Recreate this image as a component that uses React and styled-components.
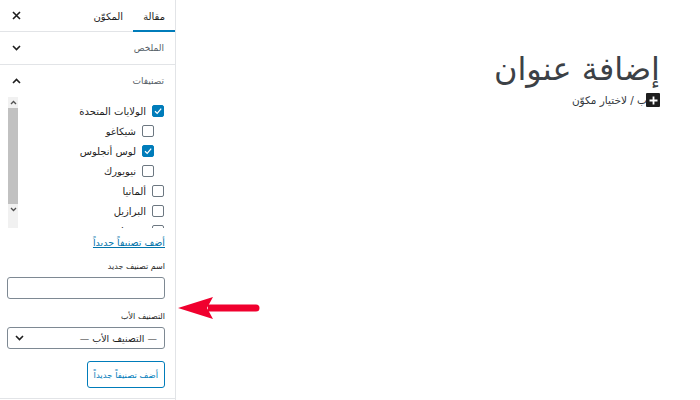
import React from "react";
import styled, { createGlobalStyle } from "styled-components";

const GlobalStyle = createGlobalStyle`
  html, body {
    margin: 0;
    padding: 0;
    background: #fff;
    font-family: "DejaVu Sans", "Noto Sans", sans-serif;
  }
`;

const categories = [
  { name: "الولايات المتحدة", checked: true, depth: 0 },
  { name: "شيكاغو", checked: false, depth: 1 },
  { name: "لوس أنجلوس", checked: true, depth: 1 },
  { name: "نيويورك", checked: false, depth: 1 },
  { name: "ألمانيا", checked: false, depth: 0 },
  { name: "البرازيل", checked: false, depth: 0 },
  { name: "فرنسا", checked: false, depth: 0 },
];

const Chevron = ({ up }) => (
  <svg width="9" height="6" viewBox="0 0 9 6">
    <path
      d={up ? "M1 5 L4.5 1.5 L8 5" : "M1 1 L4.5 4.5 L8 1"}
      fill="none"
      stroke="#1e1e1e"
      strokeWidth="1.6"
    />
  </svg>
);

const Tick = () => (
  <svg width="10" height="10" viewBox="0 0 10 10">
    <path d="M2 5.2 L4.2 7.4 L8.2 2.6" fill="none" stroke="#fff" strokeWidth="1.3" />
  </svg>
);

export default function App() {
  return (
    <>
      <GlobalStyle />
      <Page>
        <Sidebar dir="rtl">
          <Tabs>
            <Tab active>مقالة</Tab>
            <Tab>المكوّن</Tab>
            <Close>
              <svg width="9" height="9" viewBox="0 0 9 9">
                <path d="M1 1 L8 8 M8 1 L1 8" stroke="#1e1e1e" strokeWidth="1.6" />
              </svg>
            </Close>
          </Tabs>

          <Panel>
            <PanelHead>
              <span>الملخص</span>
              <Chevron />
            </PanelHead>
          </Panel>

          <Panel>
            <PanelHead>
              <span>تصنيفات</span>
              <Chevron up />
            </PanelHead>

            <ListBox>
              <List>
                {categories.map((c) => (
                  <Item key={c.name} depth={c.depth}>
                    <Box checked={c.checked}>{c.checked && <Tick />}</Box>
                    <span>{c.name}</span>
                  </Item>
                ))}
              </List>
              <Scrollbar>
                <ScrollBtn>
                  <svg width="7" height="5" viewBox="0 0 7 5">
                    <path d="M1 4 L3.5 1.5 L6 4" fill="none" stroke="#505050" strokeWidth="1.3" />
                  </svg>
                </ScrollBtn>
                <Thumb />
                <ScrollBtn>
                  <svg width="7" height="5" viewBox="0 0 7 5">
                    <path d="M1 1 L3.5 3.5 L6 1" fill="none" stroke="#505050" strokeWidth="1.3" />
                  </svg>
                </ScrollBtn>
              </Scrollbar>
            </ListBox>

            <AddForm>
              <AddLink>أضف تصنيفاً جديداً</AddLink>
              <Label>اسم تصنيف جديد</Label>
              <Input />
              <Label gap={12}>التصنيف الأب</Label>
              <Select>
                <span>— التصنيف الأب —</span>
                <Chevron />
              </Select>
              <SubmitButton>أضف تصنيفاً جديداً</SubmitButton>
            </AddForm>
          </Panel>
        </Sidebar>

        <Editor dir="rtl">
          <Title>إضافة عنوان</Title>
          <Prompt>
            <PlusBlock>
              <svg width="9" height="9" viewBox="0 0 9 9">
                <path d="M4.5 0.5 V8.5 M0.5 4.5 H8.5" stroke="#fff" strokeWidth="1.8" />
              </svg>
            </PlusBlock>
            <span>ب / لاختيار مكوّن</span>
          </Prompt>
        </Editor>

        <Pointer width="82" height="24" viewBox="0 0 82 24">
          <path d="M30 8.5 H78 a3.5 3.5 0 0 1 0 7 H30 Z" fill="#f0002e" />
          <path d="M0 12 L35 1 L29 12 L35 23 Z" fill="#f0002e" />
        </Pointer>
      </Page>
    </>
  );
}

const Page = styled.div`
  position: relative;
  display: flex;
  width: 700px;
  height: 400px;
  overflow: hidden;
`;

const Sidebar = styled.aside`
  width: 175px;
  flex-shrink: 0;
  border-right: 1px solid #e2e4e7;
  color: #1e1e1e;
`;

const Tabs = styled.div`
  display: flex;
  align-items: stretch;
  height: 32px;
  border-bottom: 1px solid #e2e4e7;
  box-sizing: border-box;
`;

const Tab = styled.div`
  display: flex;
  align-items: center;
  padding: 0 10px;
  font-size: 10px;
  color: #1e1e1e;
  box-shadow: ${(p) => (p.active ? "inset 0 -2px 0 #007cba" : "none")};
  margin-bottom: -1px;
`;

const Close = styled.div`
  margin-right: auto;
  display: flex;
  align-items: center;
  padding: 0 12px;
`;

const Panel = styled.section`
  border-bottom: 1px solid #e2e4e7;
`;

const PanelHead = styled.div`
  display: flex;
  align-items: center;
  justify-content: space-between;
  height: 32px;
  padding: 0 11px 0 12px;
  font-size: 9px;
  color: #555d66;
`;

const ListBox = styled.div`
  display: flex;
  height: 131px;
  padding-left: 8px;
`;

const List = styled.div`
  flex: 1;
  overflow: hidden;
  padding: 4px 11px 0 0;
`;

const Item = styled.div`
  display: flex;
  align-items: center;
  gap: 6px;
  height: 20px;
  margin-right: ${(p) => p.depth * 10}px;
  font-size: 10px;
  color: #1e1e1e;
`;

const Box = styled.div`
  width: 12px;
  height: 12px;
  box-sizing: border-box;
  border-radius: 2px;
  border: 1px solid ${(p) => (p.checked ? "#007cba" : "#6c7781")};
  background: ${(p) => (p.checked ? "#007cba" : "#fff")};
  display: flex;
  align-items: center;
  justify-content: center;
  flex-shrink: 0;
`;

const Scrollbar = styled.div`
  order: 1;
  width: 10px;
  display: flex;
  flex-direction: column;
  background: #f1f1f1;
`;

const ScrollBtn = styled.div`
  height: 11px;
  display: flex;
  align-items: center;
  justify-content: center;
`;

const Thumb = styled.div`
  height: 96px;
  background: #c1c1c1;
`;

const AddForm = styled.div`
  display: flex;
  flex-direction: column;
  align-items: stretch;
  padding: 7px 10px 10px 7px;
`;

const AddLink = styled.a`
  align-self: flex-start;
  font-size: 9.5px;
  line-height: 16px;
  color: #0073aa;
  text-decoration: underline;
`;

const Label = styled.div`
  font-size: 8px;
  line-height: 12px;
  color: #1e1e1e;
  margin-top: ${(p) => p.gap || 10}px;
  margin-bottom: 4px;
`;

const Input = styled.div`
  height: 22px;
  border: 1px solid #7e8993;
  border-radius: 3px;
  box-sizing: border-box;
`;

const Select = styled.div`
  height: 22px;
  border: 1px solid #7e8993;
  border-radius: 3px;
  box-sizing: border-box;
  display: flex;
  align-items: center;
  justify-content: space-between;
  padding: 0 7px;
  font-size: 9.5px;
  color: #1e1e1e;
`;

const SubmitButton = styled.div`
  align-self: flex-start;
  margin-top: 12px;
  height: 25px;
  padding: 0 6px;
  display: flex;
  align-items: center;
  white-space: nowrap;
  border: 1px solid #007cba;
  border-radius: 3px;
  font-size: 8.5px;
  color: #007cba;
`;

const Editor = styled.main`
  flex: 1;
  padding: 46px 40px 0 0;
`;

const Title = styled.h1`
  margin: 0;
  font-weight: 400;
  font-size: 32px;
  line-height: 46px;
  color: #3c4146;
`;

const Prompt = styled.div`
  display: flex;
  align-items: center;
  margin-top: 1px;
  font-size: 10.5px;
  color: #32373c;
`;

const PlusBlock = styled.div`
  width: 14px;
  height: 14px;
  background: #1e1e1e;
  border-radius: 1px;
  display: flex;
  align-items: center;
  justify-content: center;
  margin-left: -1px;
`;

const Pointer = styled.svg`
  position: absolute;
  left: 178px;
  top: 296px;
`;
